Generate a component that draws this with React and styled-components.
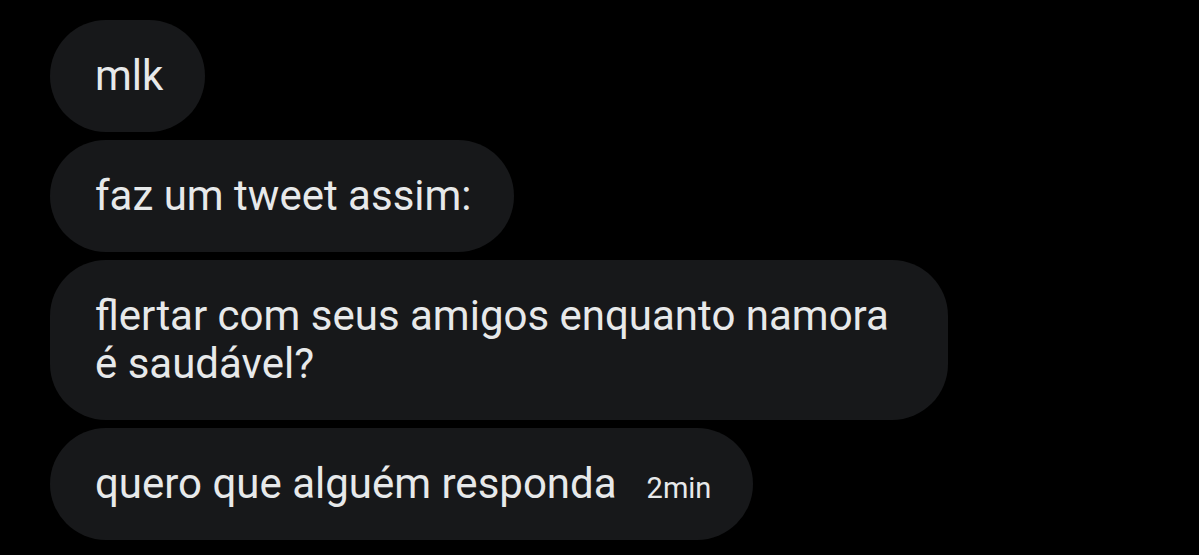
import React from "react";
import styled, { createGlobalStyle } from "styled-components";

const Global = createGlobalStyle`
  html, body {
    margin: 0;
    padding: 0;
    background: #000000;
  }
  body {
    font-family: Roboto, "Liberation Sans", sans-serif;
    -webkit-font-smoothing: antialiased;
  }
`;

const Thread = styled.div`
  display: flex;
  flex-direction: column;
  align-items: flex-start;
  gap: 8px;
  padding: 20px 0 0 50px;
  width: 1199px;
  height: 555px;
  box-sizing: border-box;
  background: #000000;
`;

const Bubble = styled.div`
  box-sizing: border-box;
  max-width: 898px;
  padding: 32px 42px 32px 45px;
  border-radius: 56px;
  background: #17181a;
  color: #e7e9ea;
  font-size: 42px;
  line-height: 48px;
`;

const Row = styled.div`
  display: flex;
  align-items: baseline;
  gap: 30px;
  height: 48px;
`;

const Time = styled.span`
  font-size: 29px;
  line-height: 1;
  color: #e7e9ea;
`;

export default function App() {
  return (
    <>
      <Global />
      <Thread>
        <Bubble>mlk</Bubble>
        <Bubble>faz um tweet assim:</Bubble>
        <Bubble>flertar com seus amigos enquanto namora é saudável?</Bubble>
        <Bubble>
          <Row>
            <span>quero que alguém responda</span>
            <Time>2min</Time>
          </Row>
        </Bubble>
      </Thread>
    </>
  );
}
